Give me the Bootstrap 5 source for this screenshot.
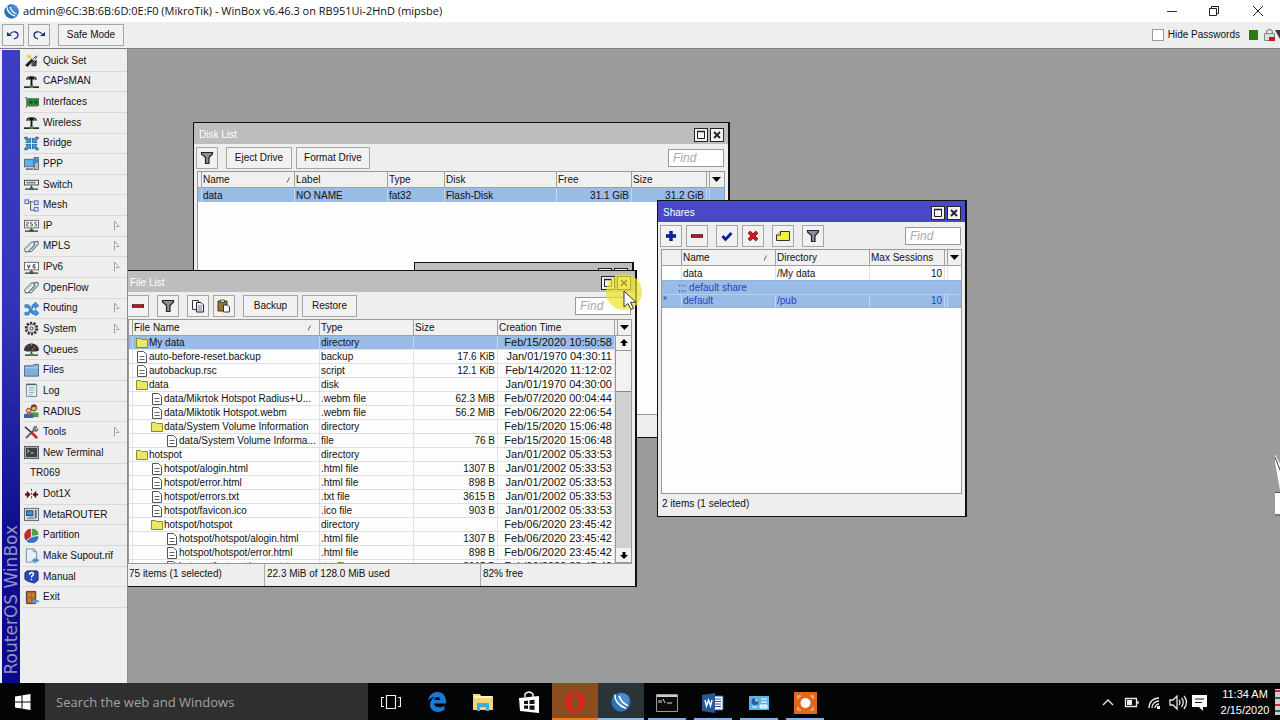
<!DOCTYPE html>
<html lang="en">
<head>
<meta charset="utf-8">
<meta name="viewport" content="width=device-width, initial-scale=1">
<title>WinBox</title>
<link href="https://cdn.jsdelivr.net/npm/bootstrap@5.3.0/dist/css/bootstrap.min.css" rel="stylesheet">
<style>
  :root { --ui: "Liberation Sans", Arial, sans-serif; --seg: "Open Sans", "Noto Sans", sans-serif; }
  body { font: 10px/14px var(--ui); color: #111; background: #9b9b9b; overflow: hidden; }
  svg { display: block; flex: none; }
  button, input { font: inherit; color: inherit; }
  button { padding: 0; border: 0; background: none; }

  .app-title { height: 22px; background: #fff; font: 11px/22px var(--seg); }
  .app-bar { height: 27px; background: #eee; border-bottom: 1px solid #7f7f7f; padding-left: 2px; }
  .tool { height: 22px; min-width: 22px; border: 1px solid #a6a6a6; background: #f1f1f1; display: inline-flex; align-items: center; justify-content: center; white-space: nowrap; }
  .tool.wide { width: 66px; }
  .tool.wider { width: 74px; }
  .tool.mid { width: 55px; }
  .tick { appearance: none; width: 12px; height: 12px; border: 1px solid #999; background: #fff; margin: 0; }

  .brand-strip { width: 18px; margin: 1px 1px 0 2px; background: linear-gradient(#3d3dc4 0, #3434b8 40%, #10108f 75%, #0a0a86); }
  .brand-strip span { writing-mode: vertical-rl; transform: rotate(180deg); font: 17px/18px "DejaVu Sans", sans-serif; color: #9292c6; padding-top: 9px; white-space: nowrap; }
  .side-wrap { background: #eee; }
  .side { width: 107px; border-right: 1px solid #8c8c8c; }
  .menu-grid { display: grid; grid-auto-rows: 1fr; min-height: 557px; padding-left: 2px; margin-top: 2px; }
  .menu-grid a { display: flex; align-items: center; gap: 4px; padding: 0 7px 0 1px; color: #111; text-decoration: none; border-bottom: 1px solid #d9d9d9; min-width: 0; white-space: nowrap; }
  .menu-grid a.bare { padding-left: 7px; }

  .desk { background: #9b9b9b; }
  .win { position: absolute; background: #eee; border: 1px solid #111; border-right-width: 2px; display: flex; flex-direction: column; }
  .win-head { height: 21px; flex: none; background: #bdbdbd; color: #fff; padding: 2px 4px 0 5px; }
  .win.active .win-head { background: #4949c8; }
  .wbs { display: flex; gap: 2px; }
  .wb { width: 14px; height: 14px; background: #f4f4f4; border: 1px solid #222; color: #111; display: flex; align-items: center; justify-content: center; }
  .win-tools { height: 27px; flex: none; padding: 0 4px 0 2px; }
  .find { width: 56px; height: 18px; border: 1px solid #999; background: #fff; padding: 0 4px; font-style: italic; font-size: 12px; border-radius: 0; }
  .find::placeholder { color: #aaa; }
  .listbox { background: #fdfdfd; border: 1px solid #999; margin: 0 3px; flex: 1; min-height: 0; overflow: hidden; }
  .listbox table { table-layout: fixed; width: 100%; border-collapse: separate; border-spacing: 0; }
  .listbox th { height: 16px; background: #f0f0f0; font-weight: 400; border-right: 1px solid #a0a0a0; border-bottom: 1px solid #a0a0a0; padding: 0 2px 0 1px; line-height: 14px; white-space: nowrap; }
  .listbox td { height: 14px; padding: 0 2px 0 1px; line-height: 13px; white-space: nowrap; overflow: hidden; border-right: 1px solid #e2e2e2; }
  .listbox th:last-child, .listbox td:last-child { border-right: 0; }
  .listbox .sel td { background: #98bce6; border-right-color: #c3d8f0; }
  .listbox .num { text-align: right; }
  .listbox .when { font-size: 11px; text-align: right; }
  .th-in { display: flex; justify-content: space-between; align-items: center; }
  .files td { border-bottom: 1px solid #e0e0e0; line-height: 13px; }
  .fname { display: flex; align-items: center; gap: 1px; }
  .lv0 { padding-left: 2px; } .lv1 { padding-left: 17px; } .lv2 { padding-left: 32px; }
  .shares .sel { color: #2b3fbd; }
  .shares .sel td { border-top: 1px dotted #8fa9cc; line-height: 12px; }
  .shares .sel ~ .sel td { border-top: 1px solid #b4cff0; border-bottom: 1px dotted #8fa9cc; }
  .status { height: 22px; flex: none; line-height: 19px; padding-left: 4px; }
  .files-status { padding-left: 2px; }
  .status > span { padding-left: 2px; }
  .status > span + span { border-left: 1px solid #aaa; }
  .status .s-count { width: 137px; } .status .s-used { width: 216px; }
  .scroller { width: 16px; flex: none; background: #d0d0d0; border-left: 1px solid #999; display: flex; flex-direction: column; }
  .scroller button { height: 15px; flex: none; background: #f2f2f2; border-bottom: 1px solid #999; display: flex; align-items: center; justify-content: center; }
  .thumb { height: 41px; background: #f2f2f2; border-bottom: 1px solid #888; }

  #disk { left: 65px; top: 73px; width: 537px; height: 316px; }
  #hiddenWin { left: 286px; top: 213px; width: 220px; height: 120px; }
  #files { left: -4px; top: 221px; width: 513px; height: 317px; }
  #shares { left: 529px; top: 151px; width: 310px; height: 317px; }
  .edge-win { position: absolute; right: 0; top: 405px; }
  .pointer { position: absolute; left: 477px; top: 223px; }

  .taskbar { height: 37px; background: #030405; color: #e8e8e8; }
  .taskbar .start { width: 45px; display: flex; align-items: center; justify-content: center; }
  .search { width: 323px; background: #2f2f2f; border: 0; color: #ddd; padding: 0 11px; font: 13px/18px var(--seg); border-radius: 0; }
  .search::placeholder { color: #a3a3a3; opacity: 1; }
  .task { width: 46px; display: flex; align-items: center; justify-content: center; border-bottom: 2px solid transparent; padding-top: 2px; }
  .task.open { background: linear-gradient(#7fb2e5, #7fb2e5) center bottom / 38px 2px no-repeat; border-bottom: 0; }
  .task.opera { background: #8b4d20; border-bottom-color: #f37a14; }
  .task.wb-on { background: #2a3338; border-bottom-color: #8cbdec; }
  .clock { font: 11px/16px var(--ui); width: 60px; text-align: center; color: #fff; }
</style>
</head>
<body class="d-flex flex-column vh-100">

<svg width="0" height="0" class="position-absolute" aria-hidden="true">
  <defs>
    <symbol id="i-quick" viewBox="0 0 16 16"><path d="M1 13 8 6l2 2-6 7z" fill="#222"/><path d="M8 8h6l-1 6H8z" fill="#333"/><path d="m9 7 4-4M12 7l2-4" stroke="#444"/><path d="m5 1 1 2 2-1-1 2 2 1-2 1-2-1-2 1 1-2-2-1 2 0z" fill="#e3d42c"/><path d="M9 9v4M11 9v4" stroke="#888" stroke-width=".7"/></symbol>
    <symbol id="i-ant" viewBox="0 0 16 16"><path d="M3 6c0-4 10-4 10 0M5 6c1-2 5-2 6 0" fill="none" stroke="#111" stroke-width="1.4"/><path d="M8 3v10" stroke="#111" stroke-width="2"/><path d="M0 14h16" stroke="#111" stroke-width="1.6"/><rect x="6" y="12" width="4" height="3" fill="#2a9b35"/></symbol>
    <symbol id="i-card" viewBox="0 0 16 16"><path d="M1 3h2v10H2" fill="none" stroke="#444"/><rect x="4" y="4" width="12" height="7" fill="#2c8b3a" stroke="#1a5524" stroke-width=".7"/><path d="M5 12h10" stroke="#222" stroke-dasharray="1 1"/><path d="M6 6h3v3H6zM11 6h3v3h-3z" fill="#164f1f"/></symbol>
    <symbol id="i-bridge" viewBox="0 0 16 16"><g fill="#3f9de0" stroke="#15508e" stroke-width=".8"><path d="M.5 1.500 3 1l2.500 2.500L7 2v5H2l1.500-1.500L1 3z"/><path d="M15.500 1.500 13 1l-2.500 2.500L9 2v5h5l-1.500-1.500L15 3z"/><path d="M.5 14.500 3 15l2.500-2.500L7 14V9H2l1.500 1.500L1 13z"/><path d="M15.500 14.500 13 15l-2.500-2.500L9 14V9h5l-1.500 1.500L15 13z"/></g></symbol>
    <symbol id="i-ppp" viewBox="0 0 16 16"><rect x="0.5" y="3.500" width="10" height="8" fill="#5cb2e6" stroke="#5b6670"/><path d="M2 14h8" stroke="#555" stroke-width="1.5"/><rect x="11" y="1.500" width="4.500" height="13" fill="#b7c2ca" stroke="#44515a" stroke-width=".8"/><circle cx="12" cy="5" r="3" fill="#3b8fd0"/></symbol>
    <symbol id="i-switch" viewBox="0 0 16 16"><rect x=".5" y="3.500" width="15" height="5" fill="#eee" stroke="#444"/><path d="M3 6h10" stroke="#222" stroke-dasharray="1 1" stroke-width="2"/><path d="M8 9v3M1 13h14" stroke="#333" stroke-width="1.300"/><rect x="6" y="11" width="4" height="3" fill="#275"/></symbol>
    <symbol id="i-mesh" viewBox="0 0 16 16"><path d="M5 4h5M7 4v9h4" fill="none" stroke="#555"/><g fill="#dfe6ff" stroke="#4a5ec4"><rect x="1" y="2" width="4" height="4"/><rect x="11" y="3" width="4" height="4"/><rect x="11" y="10" width="4" height="4"/></g></symbol>
    <symbol id="i-ip" viewBox="0 0 16 16"><rect x=".5" y="2.500" width="15" height="8" fill="#fff" stroke="#666"/><path d="M2 4.500h2.500v2H2.500v2H5M9 4.500H7v2h2v2H6.500M13.500 4.500h-2v2h2v2H11" fill="none" stroke="#555" stroke-width=".9"/><path d="M8 11v2M1 14h14" stroke="#333" stroke-width="1.200"/><rect x="6" y="12" width="4" height="3" fill="#263"/></symbol>
    <symbol id="i-v6" viewBox="0 0 16 16"><rect x=".5" y="2.500" width="15" height="8" fill="#fff" stroke="#666"/><path d="m3.500 5 1.500 3.500L6.500 5M12 4.500c-3 0-3 4-1.300 4s1.600-2.300 0-2.300" fill="none" stroke="#444" stroke-width="1.100"/><path d="M8 11v2M1 14h14" stroke="#333" stroke-width="1.200"/><rect x="6" y="12" width="4" height="3" fill="#263"/></symbol>
    <symbol id="i-tag" viewBox="0 0 16 16"><path d="M.7 10.500 7.500 3.500l3.500-.5v3.500l-6.500 7-3 .5z" fill="#f2f6f2" stroke="#456"/><path d="M4.500 13.500 8 13.500l7-7.500V2.500L11 3v3.500z" fill="#dbe8e0" stroke="#456"/><path d="m3 10.500 5-5M8 11.500l5-5.500" stroke="#7a9a9a" stroke-width=".8"/></symbol>
    <symbol id="i-route" viewBox="0 0 16 16"><path d="M1 4h4l5 7h2V9l4 4-4 3v-2H9L4 7H1zM1 12h3l2-2 1 2-2 3H1zM8 6l2-3h2V1l4 4-4 3V6h-1L9 8z" fill="#3d94dc" stroke="#1b5b9d" stroke-width=".6"/></symbol>
    <symbol id="i-gear" viewBox="0 0 16 16"><circle cx="8" cy="8" r="6" fill="none" stroke="#333" stroke-width="2.500" stroke-dasharray="2.300 1.400"/><circle cx="8" cy="8" r="4.700" fill="#ddd" stroke="#444"/><circle cx="8" cy="8" r="1.600" fill="#fff" stroke="#333"/></symbol>
    <symbol id="i-queue" viewBox="0 0 16 16"><path d="M0 9C0-1 16-1 16 9l-3 1H3z" fill="#3c3436"/><path d="m8 9 4-4M4 4l1 1M8 2v2" stroke="#a9a" stroke-width=".9"/><path d="M8 10v3M1 14h14" stroke="#222" stroke-width="1.300"/><rect x="6" y="12" width="4" height="3" fill="#2a9b35"/></symbol>
    <symbol id="i-files" viewBox="0 0 16 16"><path d="M.5 3h9l1-1.500h5V14H.5z" fill="#7fb0dd" stroke="#456a91"/><path d="M1 5h14" stroke="#b9d6f1"/></symbol>
    <symbol id="i-log" viewBox="0 0 16 16"><path d="M2.500 1.500h11v13h-11z" fill="#e4f2f4" stroke="#6b8790"/><path d="M3 1.500h10" stroke="#234" stroke-dasharray="1 1" stroke-width="2"/><path d="M5 5h6M5 7.500h6M5 10h6M5 12.500h4" stroke="#86a7ae"/></symbol>
    <symbol id="i-radius" viewBox="0 0 16 16"><circle cx="10.500" cy="4.500" r="3" fill="#e3a877" stroke="#6b3413"/><path d="M7 4c0-5 7-5 7 0l-2-1z" fill="#7a3a18"/><path d="M6.500 14V9h9v5z" fill="#4a9a43"/><circle cx="5" cy="7" r="2.500" fill="#e9b48a" stroke="#94401a"/><path d="M0 15v-4l3-1h4l3 1v4z" fill="#2c68bc"/><path d="m4 10 1 4 1-4z" fill="#f33"/></symbol>
    <symbol id="i-tools" viewBox="0 0 16 16"><path d="m2 14 9-9" stroke="#666" stroke-width="2.200"/><path d="M10 3c1-2 3-2 4-1l-2 2 1 1 2-1c0 2-1 3-3 3l-2-2z" fill="#888" stroke="#444" stroke-width=".6"/><path d="m1 2 7 6" stroke="#333" stroke-width="1.600"/><path d="m8 8 6 6" stroke="#cc2530" stroke-width="3"/></symbol>
    <symbol id="i-term" viewBox="0 0 16 16"><rect x=".5" y="1.500" width="15" height="13" fill="#b8bec1" stroke="#556"/><rect x="2" y="3" width="12" height="10" fill="#3a4144"/><path d="m3.500 5 2 1.500-2 1.500M7 8.500h3" stroke="#ddd" fill="none"/></symbol>
    <symbol id="i-dot" viewBox="0 0 16 16"><path d="M1 8h4M11 8h4" stroke="#511" stroke-width="2"/><path d="m3 4 4 4-4 4zM13 4 9 8l4 4z" fill="#511"/><path d="M8 2v12" stroke="#333" stroke-dasharray="2 2"/></symbol>
    <symbol id="i-meta" viewBox="0 0 16 16"><rect x=".5" y="1.500" width="15" height="13" fill="#dfe5ec" stroke="#556677"/><rect x="2.500" y="4" width="7" height="5" fill="#3c8cd2" stroke="#246"/><path d="m2 13 3-3h5l2 3z" fill="#99a"/><path d="M12.500 3v9" stroke="#567" stroke-width="2"/></symbol>
    <symbol id="i-part" viewBox="0 0 16 16"><path d="M7 1v8l-5 4C-1 8 1 2 7 1z" fill="#d32323" stroke="#6d1010" stroke-width=".5"/><path d="M9 1c4 0 6 3 6 6l-6 1z" fill="#46ab3e" stroke="#1c6820" stroke-width=".5"/><path d="m3 14 5-4 7-1c0 7-8 8-12 5z" fill="#2d74cf" stroke="#123f80" stroke-width=".5"/></symbol>
    <symbol id="i-make" viewBox="0 0 16 16"><path d="M2.500 1h8l3 3v11h-11z" fill="#e4f1f6" stroke="#6d8b98"/><path d="M10 1v3h3" fill="none" stroke="#6d8b98"/><path d="m15 9-3 3h4v2h-4l1 1.500L8 13z" fill="#3a8fcb"/></symbol>
    <symbol id="i-man" viewBox="0 0 16 16"><path d="M3 2h11l1 2v8l-4 3-7-2-3-2V4z" fill="#2748b8" stroke="#142a78"/><path d="M6 6c0-3 5-3 4 0-.5 1-2 1-2 3M8 10.500v1.500" fill="none" stroke="#fff" stroke-width="1.500"/></symbol>
    <symbol id="i-exit" viewBox="0 0 16 16"><path d="M2.500 1.500h10v13h-10z" fill="#a8642f" stroke="#633413"/><path d="M4.500 3.500h2.500v4H4.500zM8.500 3.500H11v4H8.500zM4.500 9H7v4H4.500z" fill="#c58448"/><path d="m8 12 4-3v2h4v2h-4v2z" fill="#4aa0d8"/></symbol>
    <symbol id="i-flag" viewBox="0 0 7 12"><path d="M1.500 10.500V1l4.500 5.500H2.500" fill="#fff" stroke="#999" stroke-width=".9"/></symbol>
    <symbol id="i-filter" viewBox="0 0 14 14"><path d="M1.500 1.500h11v1.500L9 6.500v6H5.500v-6L1.500 3z" fill="#8c8ca6" stroke="#222" stroke-width="1.200"/></symbol>
    <symbol id="i-plus" viewBox="0 0 12 12"><path d="M6 1v10M1 6h10" stroke="#0a1378" stroke-width="3.400"/><path d="M6 2v8M2 6h8" stroke="#1420d0" stroke-width="1.600"/></symbol>
    <symbol id="i-minus" viewBox="0 0 12 12"><path d="M0 6h12" stroke="#561014" stroke-width="3.600"/><path d="M1 6h10" stroke="#e01a1f" stroke-width="1.600"/></symbol>
    <symbol id="i-check" viewBox="0 0 12 12"><path d="m1.500 6 3 3.500 6-6.500" fill="none" stroke="#1018b0" stroke-width="2.800"/></symbol>
    <symbol id="i-cross" viewBox="0 0 12 12"><path d="m2 2 8 8M10 2l-8 8" stroke="#5a0b0e" stroke-width="3.600"/><path d="m2 2 8 8M10 2l-8 8" stroke="#e3191e" stroke-width="2.200"/></symbol>
    <symbol id="i-note" viewBox="0 0 14 12"><path d="M4.500 1.500h9v9H.5V5z" fill="#f5f032" stroke="#333"/><path d="M4.500 1.500V5H.5" fill="#fff" stroke="#333"/></symbol>
    <symbol id="i-copy" viewBox="0 0 12 14"><path d="M.5 1.500h6v9h-6z" fill="#fff" stroke="#334"/><path d="M4.500 3.500H9l2.500 2.500v7h-7z" fill="#eef" stroke="#223"/><path d="M6 7h4M6 9h4M6 11h4" stroke="#557" stroke-width=".8"/></symbol>
    <symbol id="i-paste" viewBox="0 0 14 14"><path d="M1 2h9v10H1z" fill="#9a7434" stroke="#4a3510"/><path d="M3.500 1h4v2.500h-4z" fill="#ddd" stroke="#333" stroke-width=".8"/><path d="M6.500 6h4l2 2v5h-6z" fill="#fff" stroke="#334"/></symbol>
    <symbol id="i-max" viewBox="0 0 10 10"><path d="M1.500 1.500h7v7h-7z" fill="none" stroke="#222"/><path d="M1 1.500h8" stroke="#222" stroke-width="1.500"/></symbol>
    <symbol id="i-x" viewBox="0 0 10 10"><path d="m2 2 6 6M8 2 2 8" stroke="#222" stroke-width="1.800"/></symbol>
    <symbol id="i-folder" viewBox="0 0 12 12"><path d="M.5 10.500v-9h4l1 1h6v8z" fill="#e8e968" stroke="#8b8c22"/></symbol>
    <symbol id="i-doc" viewBox="0 0 12 12"><path d="M1.500.5h6l3 3v8h-9z" fill="#fff" stroke="#555"/><path d="M3.500 5.500h5M3.500 8.500h5" stroke="#666"/></symbol>
    <symbol id="i-sort" viewBox="0 0 6 6"><path d="M1 5.500 3.500.5" stroke="#666"/></symbol>
    <symbol id="i-down" viewBox="0 0 9 5"><path d="M0 0h9L4.500 5z" fill="#000"/></symbol>
    <symbol id="i-winbox" viewBox="0 0 16 16"><circle cx="8" cy="8" r="7.700" fill="#2a71b8"/><circle cx="9.500" cy="6" r="5" fill="#5b9fdb" opacity=".6"/><path d="M3 2c0 5 3 9 9 11M6.500 3c1 4 3 6 7 8" fill="none" stroke="#fff" stroke-width="1.300"/></symbol>
  </defs>
</svg>

<header class="app-title d-flex align-items-center ps-1">
  <svg width="15" height="15" class="me-1"><use href="#i-winbox"/></svg>
  <span class="text-nowrap">admin@6C:3B:6B:6D:0E:F0 (MikroTik) - WinBox v6.46.3 on RB951Ui-2HnD (mipsbe)</span>
  <div class="ms-auto d-flex align-items-center gap-4 pe-3">
    <button class="me-2" aria-label="Minimize"><svg width="10" height="10"><path d="M0 5.500h10" stroke="#333"/></svg></button>
    <button class="me-2" aria-label="Restore"><svg width="11" height="10"><path d="M.5 2.500h7v7h-7zM2.500 2.500v-2h7v7h-2" fill="none" stroke="#222"/></svg></button>
    <button aria-label="Close"><svg width="12" height="10"><path d="m1 0 10 10M11 0 1 10" stroke="#222"/></svg></button>
  </div>
</header>

<div class="app-bar d-flex align-items-center">
  <div class="d-flex gap-1">
    <button class="tool" aria-label="Undo"><svg width="12" height="10"><path d="M3 4c3-4 8-2 8 1 0 2-1 3-4 4" fill="none" stroke="#112a6e" stroke-width="1.200"/><path d="M0 2v4h5z" fill="#112a6e"/></svg></button>
    <button class="tool" aria-label="Redo"><svg width="12" height="10"><path d="M9 4C6 0 1 2 1 5c0 2 1 3 4 4" fill="none" stroke="#112a6e" stroke-width="1.200"/><path d="M12 2v4H7z" fill="#112a6e"/></svg></button>
    <button class="tool wide ms-1">Safe Mode</button>
  </div>
  <div class="ms-auto d-flex align-items-center">
    <input class="tick" type="checkbox" id="hidePw"><label for="hidePw" class="ms-1 me-2">Hide Passwords</label>
    <svg width="32" height="14"><rect x="1" y="2" width="9" height="10" fill="#2c7a12"/><path d="M18.500 6V3.500q3.500-4 6 0V6" fill="none" stroke="#999" stroke-width="1.500"/><path d="M16.500 5.500h10v7h-10z" fill="#ddd" stroke="#888"/><path d="M21 9h6v4h-6z" fill="#d0141e"/><path d="M27 2h5v9z" fill="#433"/></svg>
  </div>
</div>

<main class="d-flex flex-grow-1 overflow-hidden">
  <div class="side-wrap d-flex">
    <div class="brand-strip d-flex align-items-end"><span>RouterOS WinBox</span></div>
    <nav class="side"><div class="menu-grid" id="menu"></div></nav>
  </div>

  <div class="desk flex-grow-1 position-relative overflow-hidden">

    <section class="win" id="disk">
      <div class="win-head d-flex align-items-center justify-content-between"><span>Disk List</span>
        <div class="wbs"><button class="wb" aria-label="Maximize"><svg width="10" height="10"><use href="#i-max"/></svg></button><button class="wb" aria-label="Close"><svg width="10" height="10"><use href="#i-x"/></svg></button></div></div>
      <div class="win-tools d-flex align-items-center">
        <button class="tool" aria-label="Filter"><svg width="14" height="14"><use href="#i-filter"/></svg></button>
        <button class="tool wide ms-2">Eject Drive</button><button class="tool wider ms-1">Format Drive</button>
        <input class="find ms-auto" placeholder="Find" aria-label="Find disk">
      </div>
      <div class="listbox">
        <table>
          <colgroup><col style="width:4px"><col style="width:93px"><col style="width:93px"><col style="width:57px"><col style="width:112px"><col style="width:75px"><col style="width:75px"><col style="width:3px"><col></colgroup>
          <thead><tr><th class="p-0"></th><th><div class="th-in">Name<svg width="6" height="6"><use href="#i-sort"/></svg></div></th><th>Label</th><th>Type</th><th>Disk</th><th>Free</th><th>Size</th><th class="p-0"></th><th><svg width="9" height="5" class="mx-auto"><use href="#i-down"/></svg></th></tr></thead>
          <tbody><tr class="sel"><td class="p-0"></td><td>data</td><td>NO NAME</td><td>fat32</td><td>Flash-Disk</td><td class="num">31.1 GiB</td><td class="num">31.2 GiB</td><td class="p-0"></td><td></td></tr></tbody>
        </table>
      </div>
      <div class="status"></div>
    </section>

    <section class="win" id="hiddenWin">
      <div class="win-head d-flex align-items-center justify-content-end">
        <div class="wbs"><button class="wb" aria-label="Maximize"></button><button class="wb" aria-label="Close"></button></div></div>
    </section>

    <section class="win" id="files">
      <div class="win-head d-flex align-items-center justify-content-between"><span>File List</span>
        <div class="wbs"><button class="wb" aria-label="Maximize"><svg width="10" height="10"><use href="#i-max"/></svg></button><button class="wb" aria-label="Close"><svg width="10" height="10"><use href="#i-x"/></svg></button></div></div>
      <div class="win-tools d-flex align-items-center gap-1">
        <button class="tool" aria-label="Remove"><svg width="12" height="12"><use href="#i-minus"/></svg></button>
        <button class="tool ms-1" aria-label="Filter"><svg width="14" height="14"><use href="#i-filter"/></svg></button>
        <button class="tool ms-1" aria-label="Copy"><svg width="12" height="14"><use href="#i-copy"/></svg></button>
        <button class="tool" aria-label="Paste"><svg width="14" height="14"><use href="#i-paste"/></svg></button>
        <button class="tool mid ms-1">Backup</button><button class="tool mid">Restore</button>
        <input class="find ms-auto" placeholder="Find" aria-label="Find file">
      </div>
      <div class="listbox files d-flex flex-column">
        <table>
          <colgroup><col style="width:4px"><col style="width:187px"><col style="width:94px"><col style="width:84px"><col style="width:117px"><col style="width:3px"><col></colgroup>
          <thead><tr><th class="p-0"></th><th><div class="th-in">File Name<svg width="6" height="6" class="me-1"><use href="#i-sort"/></svg></div></th><th>Type</th><th>Size</th><th>Creation Time</th><th class="p-0"></th><th><svg width="9" height="5" class="mx-auto"><use href="#i-down"/></svg></th></tr></thead>
        </table>
        <div class="d-flex flex-grow-1 overflow-hidden">
          <div class="flex-grow-1 overflow-hidden"><table>
            <colgroup><col style="width:4px"><col style="width:187px"><col style="width:94px"><col style="width:84px"><col style="width:117px"><col></colgroup>
            <tbody id="fileRows"></tbody></table></div>
          <div class="scroller"><button aria-label="Scroll up"><svg width="8" height="8"><path d="M4 0 8 4H5.500v3h-3V4H0z"/></svg></button><div class="thumb"></div><button class="mt-auto" aria-label="Scroll down"><svg width="8" height="8"><path d="M4 8 8 4H5.500V1h-3v3H0z"/></svg></button></div>
        </div>
      </div>
      <div class="status files-status d-flex"><span class="s-count">75 items (1 selected)</span><span class="s-used">22.3 MiB of 128.0 MiB used</span><span>82% free</span></div>
    </section>

    <section class="win active shares" id="shares">
      <div class="win-head d-flex align-items-center justify-content-between"><span>Shares</span>
        <div class="wbs"><button class="wb" aria-label="Maximize"><svg width="10" height="10"><use href="#i-max"/></svg></button><button class="wb" aria-label="Close"><svg width="10" height="10"><use href="#i-x"/></svg></button></div></div>
      <div class="win-tools d-flex align-items-center gap-1">
        <button class="tool" aria-label="Add"><svg width="12" height="12"><use href="#i-plus"/></svg></button>
        <button class="tool" aria-label="Remove"><svg width="12" height="12"><use href="#i-minus"/></svg></button>
        <button class="tool ms-1" aria-label="Enable"><svg width="12" height="12"><use href="#i-check"/></svg></button>
        <button class="tool" aria-label="Disable"><svg width="12" height="12"><use href="#i-cross"/></svg></button>
        <button class="tool ms-1" aria-label="Comment"><svg width="14" height="12"><use href="#i-note"/></svg></button>
        <button class="tool ms-1" aria-label="Filter"><svg width="14" height="14"><use href="#i-filter"/></svg></button>
        <input class="find ms-auto" placeholder="Find" aria-label="Find share">
      </div>
      <div class="listbox">
        <table>
          <colgroup><col style="width:20px"><col style="width:94px"><col style="width:94px"><col style="width:75px"><col style="width:3px"><col></colgroup>
          <thead><tr><th></th><th><div class="th-in">Name<svg width="6" height="6" class="me-1"><use href="#i-sort"/></svg></div></th><th>Directory</th><th>Max Sessions</th><th class="p-0"></th><th><svg width="9" height="5" class="mx-auto"><use href="#i-down"/></svg></th></tr></thead>
          <tbody><tr><td></td><td>data</td><td>/My data</td><td class="num">10</td><td class="p-0"></td><td></td></tr>
          <tr class="sel"><td colspan="6" class="ps-3">;;; default share</td></tr>
          <tr class="sel"><td>*</td><td>default</td><td>/pub</td><td class="num">10</td><td class="p-0"></td><td></td></tr></tbody>
        </table>
      </div>
      <div class="status">2 items (1 selected)</div>
    </section>

    <svg class="edge-win" width="5" height="64"><path d="M0 0 5 10V36L0 8z" fill="#fff"/><path d="M0 3 5 16" stroke="#333"/><rect y="38" width="5" height="22" fill="#fff"/><path d="M0 38.500h5M0 61h5" stroke="#555"/></svg>
    <svg class="pointer" width="40" height="40"><circle cx="19" cy="20" r="18" fill="#ece428" opacity=".7"/><path d="M19 19v16l4-3.500 3 6 2.500-1.200-3-6H31z" fill="#fff" stroke="#333"/></svg>
  </div>
</main>

<footer class="taskbar d-flex">
  <button class="start" aria-label="Start"><svg width="16" height="16"><path d="M0 2.500 6.500 1.500V7.500H0zM7.500 1.300 15.500 0V7.500h-8zM0 8.500h6.500v6L0 13.500zM7.500 8.500h8V16l-8-1.300z" fill="#fff"/></svg></button>
  <input class="search" placeholder="Search the web and Windows" aria-label="Search">
  <button class="task" aria-label="Task view"><svg width="20" height="16"><path d="M5.500 1.500h9v13h-9zM3 3.500H.5v9H3M17 3.500h2.500v9H17" fill="none" stroke="#eee" stroke-width="1.200"/></svg></button>
  <button class="task" aria-label="Edge"><svg width="20" height="20"><path d="M1 9C2 3 6 0 10.500 0 16 0 19 4 19 9v2.500H7c.3 4 6 5 10.500 2.200v4.300C11 22 3 19.500 3 12.500 3 9 5 6.500 8 5 4.500 5 2.500 7 1 9zM7.300 8h6c0-4-5.300-4-6 0z" fill="#1a79d2"/></svg></button>
  <button class="task" aria-label="Explorer"><svg width="20" height="18"><path d="M0 1h7l1 2h12v14H0z" fill="#f3d47c"/><path d="M1 4h18" stroke="#fff3c0" stroke-width="2"/><path d="M4 18v-8h12v8h-3v-4H7v4z" fill="#35b2de"/></svg></button>
  <button class="task" aria-label="Store"><svg width="20" height="22"><path d="M6 6V3q4-4 8 0v3" fill="none" stroke="#fff" stroke-width="1.400"/><path d="m0 7 20-2v17L1 20z" fill="#fff"/><path d="M5 10l4-.5V13H5zM10.500 9.300l5-.6V13h-5zM5 14.500h4V18l-4-.5zM10.500 14.500h5V19l-5-.6z" fill="#111"/></svg></button>
  <button class="task opera" aria-label="Opera"><svg width="22" height="22"><ellipse cx="11" cy="11" rx="10" ry="10.500" fill="#e3211c"/><ellipse cx="11" cy="11" rx="4.500" ry="8" fill="#8b4d20"/></svg></button>
  <button class="task wb-on" aria-label="WinBox"><svg width="20" height="20"><use href="#i-winbox"/></svg></button>
  <button class="task open" aria-label="Command prompt"><svg width="22" height="18"><path d="M.5.500h21v17H.5z" fill="#0b0b0b" stroke="#999"/><path d="M1 2h20" stroke="#ccc" stroke-width="2"/><path d="M3 6v3M5 6v3M7 5l2 4M11 9h5" stroke="#ddd"/></svg></button>
  <button class="task open" aria-label="Word"><svg width="22" height="20"><path d="M12 3h9v14h-9z" fill="#fff" stroke="#2b579a"/><path d="M13 6h6M13 8.500h6M13 11h6M13 13.500h6" stroke="#2b579a"/><path d="m0 2 13-2v20L0 18z" fill="#2b579a"/><path d="m3 7 1.500 6L6.500 7l2 6L10 7" fill="none" stroke="#fff" stroke-width="1.400"/></svg></button>
  <button class="task open" aria-label="Control panel"><svg width="20" height="14"><path d="M0 0h20v14H0z" fill="#5ab4e8"/><circle cx="6" cy="5.500" r="3.500" fill="#1e5fae"/><path d="M6 5.500V2a3.500 3.500 0 0 1 3.500 3.500z" fill="#f5b04a"/><path d="M12 3h6M12 6h6M3 11h5M11 9h7v3h-7z" stroke="#fff" fill="#cde"/></svg></button>
  <button class="task open" aria-label="Recorder"><svg width="23" height="22"><path d="M0 0h23v22H0z" fill="#e2661c"/><circle cx="11.500" cy="11" r="5" fill="#fff"/><path d="M4 7V4h3M16 4h3v3M19 15v3h-3M7 18H4v-3" fill="none" stroke="#ffd9b8" stroke-width="1.200"/></svg></button>
  <div class="ms-auto d-flex align-items-center">
    <svg width="106" height="20" role="img" aria-label="Tray"><g fill="none" stroke="#e8e8e8" stroke-width="1.300"><path d="m2 13 5-5 5 5"/><path d="M24.500 6.500h11v8h-11zM37 9v3"/><path d="M48 16c0-6 4-10 10-10M51 16c0-4 3-7 7-7M54 16c0-2 2-4 4-4"/><path d="M69 8h3l4-4v13l-4-4h-3zM78 8q2 2 0 5M80.500 6q3.500 4 0 9M83 4q5 6 0 13"/></g><path d="M26 8h5v5h-5zM56 14h3v3h-3z" fill="#eee"/><path d="M91 3h15v12h-4v4l-4-4h-7z" fill="#fff"/><path d="M94 7h9M94 10.500h7" stroke="#111"/></svg>
    <div class="clock ms-2">11:34 AM<br>2/15/2020</div>
    <svg width="5" height="26"><path d="M0 0h5v26H0z" fill="#d9c8d0"/><path d="M0 2h5M0 16h5" stroke="#c23" stroke-width="2"/><path d="M0 9h5M0 22h5" stroke="#2a6b4a" stroke-width="2"/></svg>
  </div>
</footer>

<script src="https://cdn.jsdelivr.net/npm/bootstrap@5.3.0/dist/js/bootstrap.bundle.min.js"></script>
<script>
const menu = [["Quick Set","quick"],["CAPsMAN","ant"],["Interfaces","card"],["Wireless","ant"],["Bridge","bridge"],["PPP","ppp"],["Switch","switch"],["Mesh","mesh"],["IP","ip",1],["MPLS","tag",1],["IPv6","v6",1],["OpenFlow","tag"],["Routing","route",1],["System","gear",1],["Queues","queue"],["Files","files"],["Log","log"],["RADIUS","radius"],["Tools","tools",1],["New Terminal","term"],["TR069",""],["Dot1X","dot"],["MetaROUTER","meta"],["Partition","part"],["Make Supout.rif","make"],["Manual","man"],["Exit","exit"]];
document.getElementById("menu").innerHTML = menu.map(([t, i, sub]) =>
  `<a href="#" class="${i ? "" : "bare"}">${i ? `<svg width="15" height="15"><use href="#i-${i}"/></svg>` : ""}<span>${t}</span>${sub ? '<svg width="7" height="12" class="ms-auto"><use href="#i-flag"/></svg>' : ""}</a>`).join("");

const files = [
  [0,"My data","directory","","Feb/15/2020 10:50:58"],
  [0,"auto-before-reset.backup","backup","17.6 KiB","Jan/01/1970 04:30:11"],
  [0,"autobackup.rsc","script","12.1 KiB","Feb/14/2020 11:12:02"],
  [0,"data","disk","","Jan/01/1970 04:30:00"],
  [1,"data/Mikrtok Hotspot Radius+U...",".webm file","62.3 MiB","Feb/07/2020 00:04:44"],
  [1,"data/Miktotik Hotspot.webm",".webm file","56.2 MiB","Feb/06/2020 22:06:54"],
  [1,"data/System Volume Information","directory","","Feb/15/2020 15:06:48"],
  [2,"data/System Volume Informa...","file","76 B","Feb/15/2020 15:06:48"],
  [0,"hotspot","directory","","Jan/01/2002 05:33:53"],
  [1,"hotspot/alogin.html",".html file","1307 B","Jan/01/2002 05:33:53"],
  [1,"hotspot/error.html",".html file","898 B","Jan/01/2002 05:33:53"],
  [1,"hotspot/errors.txt",".txt file","3615 B","Jan/01/2002 05:33:53"],
  [1,"hotspot/favicon.ico",".ico file","903 B","Jan/01/2002 05:33:53"],
  [1,"hotspot/hotspot","directory","","Feb/06/2020 23:45:42"],
  [2,"hotspot/hotspot/alogin.html",".html file","1307 B","Feb/06/2020 23:45:42"],
  [2,"hotspot/hotspot/error.html",".html file","898 B","Feb/06/2020 23:45:42"],
  [2,"hotspot/hotspot/errors.txt",".txt file","3615 B","Feb/06/2020 23:45:42"]];
document.getElementById("fileRows").innerHTML = files.map(([lv, n, t, s, d], k) =>
  `<tr class="${k ? "" : "sel"}"><td class="p-0"></td><td><div class="fname lv${lv}"><svg width="12" height="12"><use href="#i-${t === "directory" || t === "disk" ? "folder" : "doc"}"/></svg><span>${n}</span></div></td><td>${t}</td><td class="num">${s}</td><td class="when">${d}</td><td class="p-0"></td></tr>`).join("");
</script>
</body>
</html>
